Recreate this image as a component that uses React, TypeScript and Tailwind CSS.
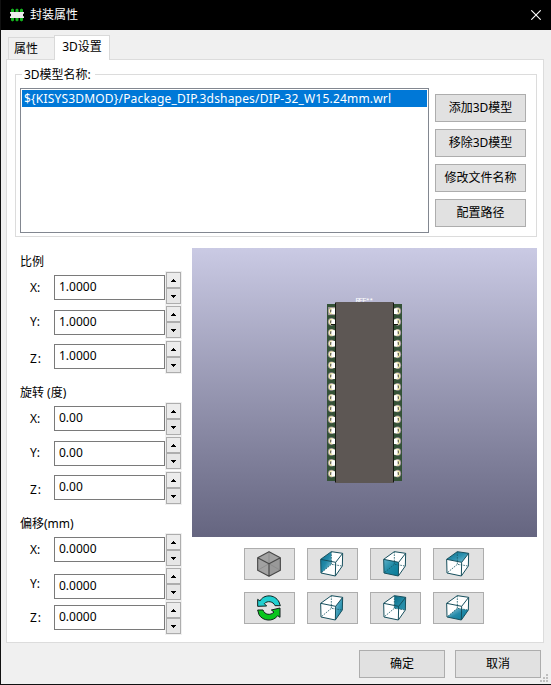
import React from 'react';

const FONT = "font-['Noto_Sans','Noto_Sans_CJK_SC',sans-serif]";

function PushButton({ label, className = '' }: { label: string; className?: string }) {
  return (
    <button
      className={`flex h-7 shrink-0 items-center justify-center border border-[#adadad] bg-[#e1e1e1] pb-px text-xs leading-4 whitespace-nowrap ${className}`}
    >
      {label}
    </button>
  );
}

function Spinner() {
  return (
    <div className="flex h-[34px] w-[17px] shrink-0 flex-col items-center bg-[#f0f0f0] py-px">
      <div className="flex h-4 w-[15px] items-center justify-center border border-[#adadad] bg-[#ececec]">
        <svg width="5" height="3" viewBox="0 0 5 3" shapeRendering="crispEdges">
          <path d="M2 0h1v1h1v1h1v1H0V2h1V1h1z" />
        </svg>
      </div>
      <div className="flex h-4 w-[15px] items-center justify-center border border-[#adadad] bg-[#e6e6e6]">
        <svg width="5" height="3" viewBox="0 0 5 3" shapeRendering="crispEdges">
          <path d="M0 0h5v1H4v1H3v1H2V2H1V1H0z" />
        </svg>
      </div>
    </div>
  );
}

type AxisProps = { axis: string; value: string; row: string; label: string; box: string };

function AxisRow({ axis, value, row, label, box }: AxisProps) {
  return (
    <div className={`flex h-[34px] items-start ${row}`}>
      <span className={`ml-[10px] w-6 shrink-0 text-xs leading-4 ${label}`}>{axis}</span>
      <div className={`h-[25px] w-[111px] shrink-0 border border-[#7a7a7a] bg-white pt-[3px] pl-1 text-xs leading-4 ${box}`}>
        {value}
      </div>
      <Spinner />
    </div>
  );
}

function AxisGroup({ title, rows }: { title: string; rows: AxisProps[] }) {
  return (
    <section className="h-[131px]">
      <h2 className="h-[18px] text-xs leading-[18px]">{title}</h2>
      {rows.map((r) => (
        <AxisRow key={r.axis} {...r} />
      ))}
    </section>
  );
}

const scaleRows: AxisProps[] = [
  { axis: 'X:', value: '1.0000', row: '', label: 'mt-[9px]', box: 'mt-1' },
  { axis: 'Y:', value: '1.0000', row: '', label: 'mt-[9px]', box: 'mt-[5px]' },
  { axis: 'Z:', value: '1.0000', row: 'mt-px', label: 'mt-[11px] tracking-[1px]', box: 'mt-1' },
];
const rotationRows: AxisProps[] = [
  { axis: 'X:', value: '0.00', row: '', label: 'mt-[9px]', box: 'mt-1' },
  { axis: 'Y:', value: '0.00', row: '', label: 'mt-[9px]', box: 'mt-[5px]' },
  { axis: 'Z:', value: '0.00', row: 'mt-px', label: 'mt-[11px] tracking-[1px]', box: 'mt-1' },
];
const offsetRows: AxisProps[] = [
  { axis: 'X:', value: '0.0000', row: '', label: 'mt-[9px]', box: 'mt-1' },
  { axis: 'Y:', value: '0.0000', row: '', label: 'mt-[9px]', box: 'mt-[7px]' },
  { axis: 'Z:', value: '0.0000', row: '', label: 'mt-[9px] tracking-[1px]', box: 'mt-1' },
];

function Pin({ x, y, flip }: { x: number; y: number; flip?: boolean }) {
  return (
    <g transform={`translate(${x} ${y}) scale(${flip ? -1 : 1} 1)`}>
      <ellipse cx="-.6" rx="3.5" ry="3.8" fill="#a092a0" />
      <ellipse cx="-.3" rx="2.9" ry="3.1" fill="#f0ecaa" />
      <rect x="-2" y="-1.4" width="2" height="2.8" fill="#6c6a58" />
      <path d="M-.4-2.4H3.4V2.9H.4L-.8 1.2z" fill="#fff" />
    </g>
  );
}

function ModelView() {
  const pins = Array.from({ length: 16 }, (_, i) => 63 + i * 10.84);
  return (
    <div className="h-[289px] w-[345px] bg-linear-to-b from-[#cacae4] to-[#656580]">
      <svg width="345" height="289" viewBox="0 0 345 289">
        <text x="163.5" y="55" fontSize="7.5" fill="#fff" fontFamily="Liberation Mono, monospace" textLength="18">
          REF**
        </text>
        <rect x="135" y="56" width="75" height="177" fill="#345236" />
        {pins.map((y, i) => (
          <g key={i}>
            {i === 0 && <rect x="136.5" y={y - 3.6} width="7" height="7.4" fill="#e9e4a8" stroke="#a092a0" strokeWidth=".6" />}
            <Pin x={140} y={y} />
            <Pin x={205} y={y} flip />
          </g>
        ))}
        <path d="M139 76.5h5M201 76.5h5" stroke="#15170f" />
        <rect x="143" y="54.5" width="59" height="180" fill="#15170f" />
        <rect x="144" y="54" width="57" height="181" fill="#5d5754" />
      </svg>
    </div>
  );
}

function ToolButton({ children }: { children: React.ReactNode }) {
  return (
    <button className="flex h-8 w-[51px] border border-[#adadad] bg-[#e1e1e1]">
      <svg width="49" height="30" viewBox="3 3 147 90">
        {children}
      </svg>
    </button>
  );
}

const FACES = {
  left: '73,11 41,34 42,75 73,49',
  right: '107,16 86,43 85,84 106,54',
  front: '41,34 86,43 85,84 42,75',
  back: '73,11 107,16 106,54 73,49',
  top: '73,11 107,16 86,43 41,34',
  bottom: '73,49 106,54 85,84 42,75',
};

const SHADES: Record<keyof typeof FACES, [string, string, string]> = {
  left: ['#0d6f8c', '#2289a8', '#8cc6d8'],
  right: ['#8cc6d8', '#3a9ab6', '#087c98'],
  front: ['#5fb0c8', '#1c88a4', '#087c98'],
  back: ['#0b6a82', '#1f88a4', '#2f93ae'],
  top: ['#0d6f8c', '#2b90ae', '#7cc0d4'],
  bottom: ['#a4d3e2', '#2289a8', '#087c98'],
};

function CubeFace({ face }: { face: keyof typeof FACES }) {
  const id = `face-${face}`;
  const [from, via, to] = SHADES[face];
  return (
    <>
      <defs>
        <linearGradient id={id} x1="0" y1="0" x2="1" y2="1">
          <stop offset="0" stopColor={from} />
          <stop offset=".5" stopColor={via} />
          <stop offset="1" stopColor={to} />
        </linearGradient>
      </defs>
      <path d="M73 11L107 16L106 54L85 84L42 75L41 34Z" fill="#fff" />
      <polygon points={FACES[face]} fill={`url(#${id})`} />
      <path d="M73 11V49L106 54M73 49L42 75" fill="none" stroke="#185866" strokeWidth="2.4" strokeDasharray="5 3" />
      <path
        d="M73 11L107 16L106 54L85 84L42 75L41 34ZM41 34L86 43L107 16M86 43L85 84"
        fill="none"
        stroke="#164f5d"
        strokeWidth="3"
        strokeLinejoin="round"
      />
    </>
  );
}

function IsoCube() {
  return (
    <>
      <path d="M75 11L109 29V67L75 85L41 67V29Z" fill="#a2a2a2" />
      <path d="M75 47L109 29V67L75 85Z" fill="#999" />
      <path d="M75 11V47M41 67L75 47L109 67" fill="none" stroke="#858585" strokeWidth="2" />
      <path
        d="M75 11L109 29V67L75 85L41 67V29ZM41 29L75 47L109 29M75 47V85"
        fill="none"
        stroke="#484848"
        strokeWidth="3.4"
        strokeLinejoin="round"
      />
    </>
  );
}

function ReloadIcon() {
  return (
    <g stroke="#10201c" strokeWidth="3" strokeLinejoin="round">
      <path d="M41 22L48 27C58 7 92 5 105 30L109 41H93C88 28 70 25 61 35L68 42L41 43Z" fill="#20cfd0" />
      <path d="M108 48V76L101 71C88 90 56 88 45 68L41 54H57C62 69 80 71 90 60L82 54Z" fill="#09c51c" />
    </g>
  );
}

export default function App() {
  return (
    <div className={`flex h-[685px] w-[551px] flex-col overflow-hidden border-b border-l border-[#111] bg-[#f0f0f0] text-xs text-black ${FONT}`}>
      <header className="-ml-px flex h-[30px] shrink-0 items-center bg-black text-white">
        <svg className="ml-[10px]" width="15" height="14" viewBox="0 0 15 14">
          <path
            d="M1 4V1.5L2.5.5L4 1.5V4zM5.5 4V1.5L7 .5L8.5 1.5V4zM10 4V1.5L11.5.5L13 1.5V4zM1 10v2.5l1.5 1L4 12.5V10zM5.5 10v2.5l1.5 1l1.5-1V10zM10 10v2.5l1.5 1l1.5-1V10z"
            fill="#14b31e"
          />
          <path d="M0 4h14v1.5l-1 .5v2l1 .5V10H0V8.500l1-.5V6l-1-.5z" fill="#ececec" />
        </svg>
        <h1 className="ml-[5px] text-xs leading-4">封装属性</h1>
        <svg className="mr-[10px] ml-auto" width="10" height="10" viewBox="0 0 10 10">
          <path d="M.3.3l9.400 9.400M9.700.3l-9.400 9.400" stroke="#fff" strokeWidth="1.1" />
        </svg>
      </header>

      <nav className="ml-[7px] flex h-[29px] shrink-0 items-end">
        <div className="flex h-[22px] w-[46px] items-center border border-r-0 border-b-0 border-[#d9d9d9] pl-[5px]">属性</div>
        <div className="relative -mb-px flex h-[25px] w-14 justify-center border border-b-0 border-[#d9d9d9] bg-white pt-[3px] leading-4">
          3D设置
        </div>
      </nav>

      <main className="ml-[5px] h-[584px] w-[538px] shrink-0 border border-[#dcdcdc] bg-white pl-2">
        <fieldset className="mt-[14px] flex h-[163px] w-[522px] border border-[#dcdcdc] pt-[13px] pl-1">
          <div className="-mt-[21px] w-0 leading-4">
            <span className="ml-[2px] block w-[73px] bg-white pl-[2px] whitespace-nowrap">3D模型名称:</span>
          </div>
          <div className="h-[145px] w-[409px] shrink-0 border border-[#828790] p-px">
            <div className="h-[17px] overflow-hidden bg-[#0078d7] pl-[2px] leading-[17px] tracking-[0.187px] whitespace-nowrap text-white">
              {'${KISYS3DMOD}/Package_DIP.3dshapes/DIP-32_W15.24mm.wrl'}
            </div>
          </div>
          <div className="mt-[6px] ml-[6px] flex flex-col gap-[7px]">
            <PushButton label="添加3D模型" className="w-[91px]" />
            <PushButton label="移除3D模型" className="w-[91px]" />
            <PushButton label="修改文件名称" className="w-[91px]" />
            <PushButton label="配置路径" className="w-[91px]" />
          </div>
        </fieldset>

        <div className="mt-[11px] flex">
          <div className="ml-[5px] w-[172px] shrink-0 pt-[5px]">
            <AxisGroup title="比例" rows={scaleRows} />
            <AxisGroup title="旋转 (度)" rows={rotationRows} />
            <AxisGroup title="偏移(mm)" rows={offsetRows} />
          </div>
          <div>
            <ModelView />
            <div className="mt-[11px] ml-[52px] grid w-[240px] grid-cols-4 gap-3">
              <ToolButton><IsoCube /></ToolButton>
              <ToolButton><CubeFace face="left" /></ToolButton>
              <ToolButton><CubeFace face="front" /></ToolButton>
              <ToolButton><CubeFace face="top" /></ToolButton>
              <ToolButton><ReloadIcon /></ToolButton>
              <ToolButton><CubeFace face="right" /></ToolButton>
              <ToolButton><CubeFace face="back" /></ToolButton>
              <ToolButton><CubeFace face="bottom" /></ToolButton>
            </div>
          </div>
        </div>
      </main>

      <footer className="flex pt-[7px] pl-[358px]">
        <PushButton label="确定" className="w-[86px]" />
        <PushButton label="取消" className="ml-[10px] w-[86px]" />
        <svg className="-ml-px mt-6" width="9" height="9" viewBox="0 0 9 9" shapeRendering="crispEdges">
          <path d="M6 0h2v2H6zM3 3h2v2H3zM6 3h2v2H6zM0 6h2v2H0zM3 6h2v2H3zM6 6h2v2H6z" fill="#bfbfbf" />
        </svg>
      </footer>
    </div>
  );
}
